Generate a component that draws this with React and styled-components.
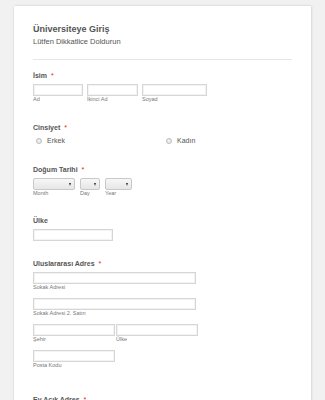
import React from "react";
import styled, { createGlobalStyle } from "styled-components";

const Global = createGlobalStyle`
  html, body { margin: 0; padding: 0; overflow: hidden; }
  body {
    background: #f1f1f1;
    font-family: "Liberation Sans", Arial, sans-serif;
  }
`;

const Page = styled.div`
  padding: 6px 14px 0;
`;

const Card = styled.div`
  background: #fff;
  box-shadow: 0 0 2px rgba(0, 0, 0, 0.14), 1px 0 3px rgba(0, 0, 0, 0.06);
  padding: 18px 19px 60px;
  min-height: 420px;
  box-sizing: border-box;
`;

const Title = styled.div`
  font-size: 9px;
  line-height: 11px;
  font-weight: bold;
  color: #555;
`;

const Subtitle = styled.div`
  margin-top: 2px;
  font-size: 7.5px;
  line-height: 9px;
  color: #555;
`;

const Divider = styled.div`
  margin-top: 13px;
  height: 1px;
  background: #e6e6e6;
`;

const Field = styled.div`
  margin-top: ${(p) => p.$mt}px;
  display: flex;
  flex-direction: column;
`;

const Label = styled.div`
  font-size: 7px;
  line-height: 9px;
  font-weight: bold;
  color: #555;
  margin-bottom: 4px;
`;

const Required = styled.span`
  color: #e31b1b;
  margin-left: 4px;
  font-weight: normal;
`;

const Row = styled.div`
  display: flex;
  gap: ${(p) => p.$gap}px;
`;

const Stack = styled.div`
  display: flex;
  flex-direction: column;
  gap: 7px;
`;

const Col = styled.div`
  display: flex;
  flex-direction: column;
  width: ${(p) => p.$w}px;
`;

const TextBox = styled.input`
  box-sizing: border-box;
  width: 100%;
  height: 12px;
  margin: 0;
  padding: 0;
  border: 1px solid #d6d6d6;
  background: #fff;
  box-shadow: inset 0 0 0 1px #f3f3f3;
  outline: none;
`;

const SubLabel = styled.div`
  font-size: 5.5px;
  line-height: 7px;
  color: #777;
  white-space: nowrap;
`;

const SelectBox = styled.div`
  position: relative;
  box-sizing: border-box;
  height: 12px;
  width: 100%;
  border: 1px solid #c9c9c9;
  border-radius: 2px;
  background: linear-gradient(#f7f7f7, #e6e6e6);
  &::after {
    content: "";
    position: absolute;
    right: 3px;
    top: 4px;
    border-left: 1.5px solid transparent;
    border-right: 1.5px solid transparent;
    border-top: 3px solid #333;
  }
`;

const RadioGroup = styled.div`
  display: grid;
  grid-template-columns: 130px 130px;
  padding-left: 3px;
`;

const RadioOption = styled.label`
  display: flex;
  align-items: center;
  gap: 5px;
  font-size: 7px;
  line-height: 9px;
  color: #555;
`;

const RadioDot = styled.span`
  box-sizing: border-box;
  width: 6px;
  height: 6px;
  border-radius: 50%;
  border: 1px solid #bdbdbd;
  background: radial-gradient(circle, #f2f2f2 30%, #d8d8d8 100%);
`;

function Input({ w, sub }) {
  return (
    <Col $w={w}>
      <TextBox type="text" readOnly />
      {sub !== undefined && <SubLabel>{sub}</SubLabel>}
    </Col>
  );
}

function Select({ w, sub }) {
  return (
    <Col $w={w}>
      <SelectBox />
      <SubLabel>{sub}</SubLabel>
    </Col>
  );
}

export default function App() {
  return (
    <>
      <Global />
      <Page>
        <Card>
          <Title>Üniversiteye Giriş</Title>
          <Subtitle>Lütfen Dikkatlice Doldurun</Subtitle>
          <Divider />

          <Field $mt={11}>
            <Label>
              İsim<Required>*</Required>
            </Label>
            <Row $gap={4}>
              <Input w={50} sub="Ad" />
              <Input w={51} sub="İkinci Ad" />
              <Input w={65} sub="Soyad" />
            </Row>
          </Field>

          <Field $mt={20}>
            <Label>
              Cinsiyet<Required>*</Required>
            </Label>
            <RadioGroup>
              <RadioOption>
                <RadioDot />
                Erkek
              </RadioOption>
              <RadioOption>
                <RadioDot />
                Kadın
              </RadioOption>
            </RadioGroup>
          </Field>

          <Field $mt={20}>
            <Label>
              Doğum Tarihi<Required>*</Required>
            </Label>
            <Row $gap={5}>
              <Select w={42} sub="Month" />
              <Select w={20} sub="Day" />
              <Select w={27} sub="Year" />
            </Row>
          </Field>

          <Field $mt={19}>
            <Label>Ülke</Label>
            <Input w={80} />
          </Field>

          <Field $mt={18}>
            <Label>
              Uluslararası Adres<Required>*</Required>
            </Label>
            <Stack>
              <Input w={163} sub="Sokak Adresi" />
              <Input w={163} sub="Sokak Adresi 2. Satırı" />
              <Row $gap={1}>
                <Input w={82} sub="Şehir" />
                <Input w={82} sub="Ülke" />
              </Row>
              <Input w={82} sub="Posta Kodu" />
            </Stack>
          </Field>

          <Field $mt={26}>
            <Label>
              Ev Açık Adres<Required>*</Required>
            </Label>
            <Input w={163} />
          </Field>
        </Card>
      </Page>
    </>
  );
}
